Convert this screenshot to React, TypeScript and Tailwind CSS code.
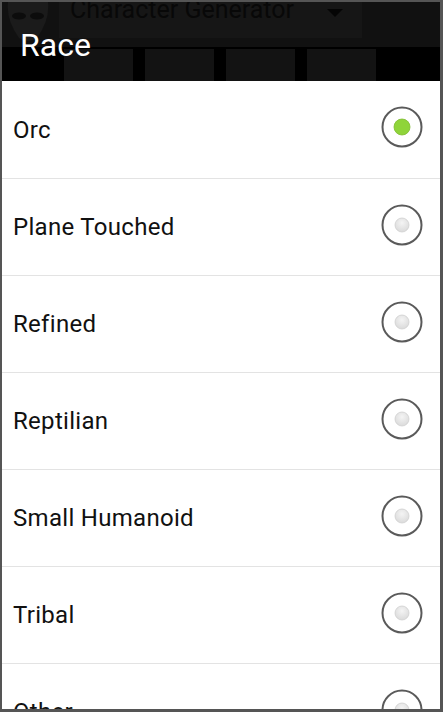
import React from "react";

const races = ["Orc", "Plane Touched", "Refined", "Reptilian", "Small Humanoid", "Tribal", "Other"];

function Radio({ checked }: { checked: boolean }) {
  return (
    <svg width="44" height="44" viewBox="0 0 44 44">
      <circle cx="22" cy="22" r="19.5" fill="#fff" stroke="#5a5a5a" strokeWidth="2" />
      {checked ? (
        <circle cx="22" cy="22" r="8" fill="#8fd43a" stroke="#7dbb30" strokeWidth="0.8" />
      ) : (
        <>
          <defs>
            <radialGradient id="g" cx="50%" cy="35%" r="60%">
              <stop offset="0%" stopColor="#f4f4f4" />
              <stop offset="100%" stopColor="#dcdcdc" />
            </radialGradient>
          </defs>
          <circle cx="22" cy="22" r="7" fill="url(#g)" stroke="#cfcfcf" strokeWidth="0.8" />
        </>
      )}
    </svg>
  );
}

export default function App() {
  return (
    <div
      className="w-[443px] h-[712px] overflow-hidden bg-[#555] p-[2px] pr-[3px] pb-[3px] flex flex-col"
      style={{ fontFamily: "Roboto, 'Noto Sans', sans-serif" }}
    >
      <div className="relative h-[79px] shrink-0 bg-black overflow-hidden">
        {/* background app */}
        <div className="h-[45px] bg-[#111] flex items-start">
          <div className="w-[52px] h-[45px] flex items-start justify-center">
            <svg width="46" height="40" viewBox="0 0 46 40">
              <path d="M3 0 Q23 -4 43 0 Q45 18 32 36 Q23 42 14 36 Q1 18 3 0Z" fill="#1b1b1b" />
              <ellipse cx="14" cy="14" rx="7" ry="3.5" fill="#0c0c0c" />
              <ellipse cx="32" cy="14" rx="7" ry="3.5" fill="#0c0c0c" />
            </svg>
          </div>
          <div className="ml-[5px] w-[303px] h-[36px] bg-[#161616] relative">
            <div className="absolute left-[11px] top-[-11px] text-[25px] text-[#080808] whitespace-nowrap">Character Generator</div>
            <div className="absolute left-[268px] top-[7px] w-0 h-0 border-l-[8px] border-r-[8px] border-t-[8px] border-l-transparent border-r-transparent border-t-[#050505]" />
          </div>
        </div>
        <div className="flex pl-[62px] gap-[12px] pt-[2px]">
          <div className="w-[69px] h-[32px] bg-[#131313]" />
          <div className="w-[69px] h-[32px] bg-[#131313]" />
          <div className="w-[69px] h-[32px] bg-[#131313]" />
          <div className="w-[69px] h-[32px] bg-[#131313]" />
        </div>
        <div className="absolute left-[18px] top-[19px] text-[32px] leading-[48px] text-white">Race</div>
      </div>
      <div className="flex-1 bg-white overflow-hidden">
        {races.map((r, i) => (
          <div key={r} className={`h-[97px] flex items-center justify-between pl-[11px] pr-[16px] ${i > 0 ? "border-t border-[#e3e3e3]" : ""}`}>
            <span className="text-[24px] tracking-[0.3px] text-[#111]">{r}</span>
            <div className="mb-[5px]">
              <Radio checked={i === 0} />
            </div>
          </div>
        ))}
      </div>
    </div>
  );
}
